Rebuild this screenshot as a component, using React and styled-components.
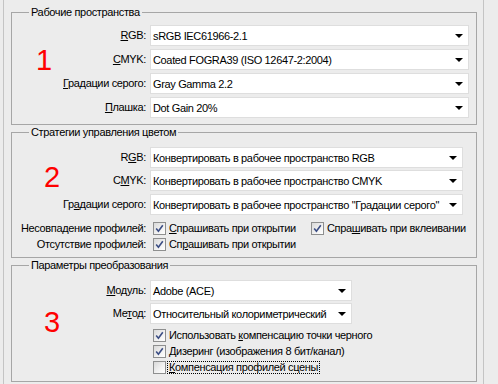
import React from "react";
import styled, { createGlobalStyle } from "styled-components";

const GlobalStyle = createGlobalStyle`
  html, body {
    margin: 0;
    padding: 0;
    background: #ececec;
  }
  body {
    font-family: "Liberation Sans", Arial, sans-serif;
    font-size: 11px;
    letter-spacing: -0.35px;
    color: #000;
  }
`;

const Panel = styled.div`
  margin-left: 3px;
  width: 481px;
  height: 384px;
  box-sizing: border-box;
  border-left: 1px solid #c4c4c4;
  border-right: 1px solid #c4c4c4;
  padding: 5px 6px 0 7px;
  display: flex;
  flex-direction: column;
`;

const Group = styled.fieldset`
  margin: 0;
  padding: 0;
  min-width: 0;
  border: 1px solid #a6a6a6;
`;

const Legend = styled.legend`
  margin-left: 17px;
  padding: 0 2px;
  line-height: 14px;
`;

const Body = styled.div`
  position: relative;
  display: flex;
  flex-direction: column;
  padding: ${(p) => p.$pt}px 0 ${(p) => p.$pb}px;
`;

/* большая красная цифра поверх скриншота */
const Mark = styled.span`
  position: absolute;
  left: ${(p) => p.$x}px;
  top: ${(p) => p.$y}px;
  font-size: 29px;
  line-height: 29px;
  letter-spacing: 0;
  color: #ff0000;
`;

const Row = styled.div`
  display: grid;
  grid-template-columns: 134px 1fr;
  column-gap: 4px;
  align-items: ${(p) => (p.$check ? "center" : "start")};
  margin-top: ${(p) => p.$mt || 0}px;
`;

const Label = styled.div`
  text-align: right;
  white-space: nowrap;
  line-height: 14px;
  padding-top: ${(p) => (p.$check ? 0 : 3)}px;
`;

const Select = styled.div`
  width: ${(p) => p.$w}px;
  height: 21px;
  box-sizing: border-box;
  background: #fff;
  border: 1px solid #dedede;
  display: flex;
  align-items: center;
  justify-content: space-between;
  padding: 1px 5px 0 2px;
  white-space: nowrap;
  overflow: hidden;
`;

const Arrow = styled.span`
  flex: none;
  width: 0;
  height: 0;
  border-left: 4px solid transparent;
  border-right: 4px solid transparent;
  border-top: 4px solid #000;
`;

const Checks = styled.div`
  display: flex;
  align-items: center;
  padding-left: 3px;
`;

const CheckItem = styled.label`
  display: inline-flex;
  align-items: center;
  height: 16px;
  white-space: nowrap;
  width: ${(p) => (p.$w ? `${p.$w}px` : "auto")};
`;

const Box = styled.span`
  flex: none;
  width: 13px;
  height: 13px;
  box-sizing: border-box;
  margin-right: 1px;
  border: 1px solid #8e8f8f;
  background: linear-gradient(135deg, #d9d9d9 0%, #f2f2f2 60%, #fff 100%);
  display: flex;
  align-items: center;
  justify-content: center;
`;

const CheckText = styled.span`
  padding: 0 1px;
  line-height: 11px;
  border: 1px ${(p) => (p.$focus ? "dotted #000" : "solid transparent")};
`;

function Check({ checked, children, w, focus }) {
  return (
    <CheckItem $w={w}>
      <Box>
        {checked && (
          <svg width="9" height="9" viewBox="0 0 9 9">
            <path d="M1.2 4.6 L3.4 7.2 L7.8 1.2" fill="none" stroke="#3b4d84" strokeWidth="1.6" />
          </svg>
        )}
      </Box>
      <CheckText $focus={focus}>{children}</CheckText>
    </CheckItem>
  );
}

function Field({ label, width, value, mt }) {
  return (
    <Row $mt={mt}>
      <Label>{label}</Label>
      <Select $w={width}>
        <span>{value}</span>
        <Arrow />
      </Select>
    </Row>
  );
}

export default function App() {
  return (
    <>
      <GlobalStyle />
      <Panel>
        <Group>
          <Legend>Рабочие пространства</Legend>
          <Body $pt={6} $pb={6}>
            <Mark $x={24} $y={27}>1</Mark>
            <Field label={<><u>R</u>GB:</>} width={319} value="sRGB IEC61966-2.1" />
            <Field mt={3} label={<><u>C</u>MYK:</>} width={319} value="Coated FOGRA39 (ISO 12647-2:2004)" />
            <Field mt={3} label={<><u>Г</u>радации серого:</>} width={319} value="Gray Gamma 2.2" />
            <Field mt={3} label={<><u>П</u>лашка:</>} width={319} value="Dot Gain 20%" />
          </Body>
        </Group>

        <Group>
          <Legend>Стратегии управления цветом</Legend>
          <Body $pt={8} $pb={5}>
            <Mark $x={32} $y={24}>2</Mark>
            <Field label={<>R<u>G</u>B:</>} width={313} value="Конвертировать в рабочее пространство RGB" />
            <Field mt={2} label={<>C<u>M</u>YK:</>} width={313} value="Конвертировать в рабочее пространство CMYK" />
            <Field
              mt={3}
              label={<>Гр<u>а</u>дации серого:</>}
              width={313}
              value={'Конвертировать в рабочее пространство "Градации серого"'}
            />
            <Row $check $mt={5}>
              <Label $check>Несовпадение профилей:</Label>
              <Checks>
                <Check checked w={158}>
                  <u>С</u>прашивать при открытии
                </Check>
                <Check checked>
                  Спра<u>ш</u>ивать при вклеивании
                </Check>
              </Checks>
            </Row>
            <Row $check>
              <Label $check>Отсутствие профилей:</Label>
              <Checks>
                <Check checked>
                  Сп<u>р</u>ашивать при открытии
                </Check>
              </Checks>
            </Row>
          </Body>
        </Group>

        <Group>
          <Legend>Параметры преобразования</Legend>
          <Body $pt={8} $pb={6}>
            <Mark $x={32} $y={36}>3</Mark>
            <Field label={<><u>М</u>одуль:</>} width={202} value="Adobe (ACE)" />
            <Field mt={2} label={<>Ме<u>т</u>од:</>} width={202} value="Относительный колориметрический" />
            <Row $check $mt={3}>
              <Label $check />
              <Checks>
                <Check checked>
                  Использовать <u>к</u>омпенсацию точки черного
                </Check>
              </Checks>
            </Row>
            <Row $check>
              <Label $check />
              <Checks>
                <Check checked>
                  <u>Д</u>изеринг (изображения 8 бит/канал)
                </Check>
              </Checks>
            </Row>
            <Row $check>
              <Label $check />
              <Checks>
                <Check focus>
                  <u>К</u>омпенсация профилей сцены
                </Check>
              </Checks>
            </Row>
          </Body>
        </Group>
      </Panel>
    </>
  );
}
